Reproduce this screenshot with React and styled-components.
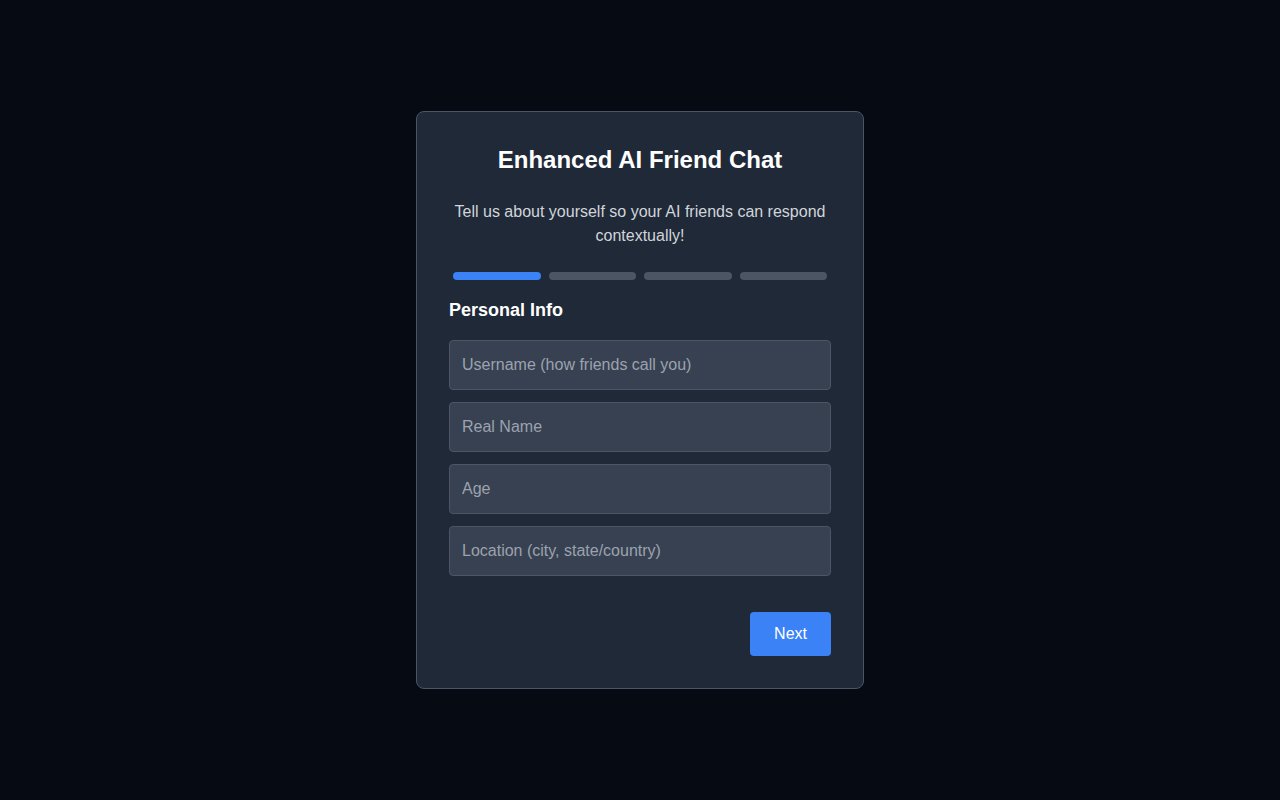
import React from "react";
import styled, { createGlobalStyle } from "styled-components";

const Global = createGlobalStyle`
  * { box-sizing: border-box; }
  html, body { margin: 0; padding: 0; background: #050a13; }
  body { font-family: "Liberation Sans", Arial, sans-serif; }
`;

const Page = styled.div`
  min-height: 800px;
  display: flex;
  align-items: center;
  justify-content: center;
`;

const Card = styled.div`
  width: 448px;
  background: #1f2937;
  border: 1px solid #4b5563;
  border-radius: 8px;
  padding: 32px;
  display: flex;
  flex-direction: column;
`;

const Title = styled.h1`
  margin: 0;
  font-size: 24px;
  line-height: 32px;
  font-weight: 700;
  color: #ffffff;
  text-align: center;
`;

const Subtitle = styled.p`
  margin: 24px 0 0;
  font-size: 16px;
  line-height: 24px;
  color: #d1d5db;
  text-align: center;
`;

const Progress = styled.div`
  display: flex;
  margin-top: 24px;
`;

const Bar = styled.div`
  flex: 1;
  height: 8px;
  margin: 0 4px;
  border-radius: 9999px;
  background: ${(p) => (p.$active ? "#3b82f6" : "#4b5563")};
`;

const Section = styled.h2`
  margin: 16px 0 0;
  font-size: 18px;
  line-height: 28px;
  font-weight: 700;
  color: #ffffff;
`;

const Fields = styled.div`
  display: flex;
  flex-direction: column;
  gap: 12px;
  margin-top: 16px;
`;

const Input = styled.input`
  width: 100%;
  height: 50px;
  padding: 0 12px;
  background: #374151;
  border: 1px solid #4b5563;
  border-radius: 4px;
  color: #ffffff;
  font-family: inherit;
  font-size: 16px;
  outline: none;
  &::placeholder { color: #9ca3af; }
`;

const Actions = styled.div`
  display: flex;
  justify-content: flex-end;
  margin-top: 36px;
`;

const Button = styled.button`
  height: 44px;
  padding: 0 24px;
  background: #3b82f6;
  color: #ffffff;
  border: none;
  border-radius: 4px;
  font-family: inherit;
  font-size: 16px;
  cursor: pointer;
`;

export default function App() {
  const steps = [true, false, false, false];
  return (
    <Page>
      <Global />
      <Card>
        <Title>Enhanced AI Friend Chat</Title>
        <Subtitle>Tell us about yourself so your AI friends can respond contextually!</Subtitle>
        <Progress>
          {steps.map((a, i) => (
            <Bar key={i} $active={a} />
          ))}
        </Progress>
        <Section>Personal Info</Section>
        <Fields>
          <Input placeholder="Username (how friends call you)" />
          <Input placeholder="Real Name" />
          <Input placeholder="Age" />
          <Input placeholder="Location (city, state/country)" />
        </Fields>
        <Actions>
          <Button>Next</Button>
        </Actions>
      </Card>
    </Page>
  );
}
